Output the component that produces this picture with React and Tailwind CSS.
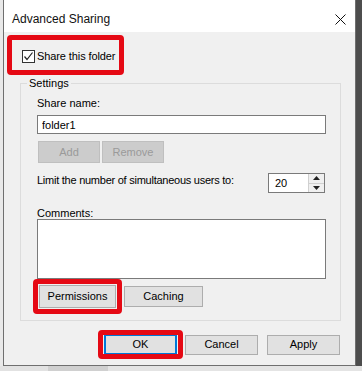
import { useState } from "react";

function Btn({ children, disabled, focused, className = "" }) {
  let tone = "bg-[#e1e1e1] border-[#adadad] text-[#000]";
  if (disabled) tone = "bg-[#cccccc] border-[#bfbfbf] text-[#9a9a9a]";
  if (focused) tone = "bg-[#e1e1e1] border-[#0078d7] text-[#000] border-x-2";
  return (
    <button
      className={`flex items-center justify-center border text-[11px] leading-none ${tone} ${className}`}
    >
      {children}
    </button>
  );
}

function Callout({ children, className = "" }) {
  return <div className={`rounded-[4px] border-[5px] border-[#e50914] ${className}`}>{children}</div>;
}

export default function App() {
  const [shared, setShared] = useState(true);
  const [name, setName] = useState("folder1");
  const [limit, setLimit] = useState(20);
  const [comments, setComments] = useState("");

  return (
    <div
      className="flex h-[371px] w-[362px] flex-col overflow-hidden bg-[#dadada] text-black"
      style={{ fontFamily: '"Liberation Sans", Arial, sans-serif' }}
    >
      <div className="flex h-[366px]">
        <div className="w-[3px] bg-[#e9e9e9]" />

        {/* dialog window */}
        <div className="flex w-[353px] flex-col border-x border-b border-[#6f6f6f] bg-[#f0f0f0]">
          <div className="flex h-[32px] items-start justify-between bg-white pl-[8px] pr-[9px]">
            <span className="mt-[11px] text-[12px] leading-[16px] text-[#111]">Advanced Sharing</span>
            <svg className="mt-[14px]" width="11" height="11" viewBox="0 0 11 11">
              <path d="M0.5 0.5 L10.5 10.5 M10.5 0.5 L0.5 10.5" stroke="#111" strokeWidth="1" />
            </svg>
          </div>

          <Callout className="ml-[3px] mt-[3px] h-[40px] w-[117px] pl-[10px] pt-[10px]">
            <label className="flex items-start gap-[2px] whitespace-nowrap">
              <input
                type="checkbox"
                checked={shared}
                onChange={(e) => setShared(e.target.checked)}
                className="hidden"
              />
              <span className="flex h-[13px] w-[13px] shrink-0 items-center justify-center border border-[#333] bg-white">
                {shared && (
                  <svg width="11" height="11" viewBox="0 0 11 11">
                    <path d="M1.5 5.5 L4 8.5 L9.5 1.5" fill="none" stroke="#222" strokeWidth="1.2" />
                  </svg>
                )}
              </span>
              <span className="text-[11px] leading-[13px] tracking-[-0.1px]">Share this folder</span>
            </label>
          </Callout>

          {/* Settings group */}
          <div className="relative ml-[16px] mt-[8px] w-[321px] border border-[#dcdcdc] pb-[6px] pl-[16px]">
            <span className="absolute -top-[7px] left-[6px] bg-[#f0f0f0] px-[2px] text-[11px] leading-[13px]">
              Settings
            </span>

            <div className="mt-[13px] text-[11px] leading-[13px]">Share name:</div>
            <input
              value={name}
              onChange={(e) => setName(e.target.value)}
              className="mt-[5px] block h-[19px] w-[289px] border border-[#7a7a7a] bg-white pl-[4px] text-[11px] leading-[17px] outline-none"
            />

            <div className="mt-[7px] flex gap-[2px] pl-[1px]">
              <Btn disabled className="h-[22px] w-[62px]">Add</Btn>
              <Btn disabled className="h-[22px] w-[62px]">Remove</Btn>
            </div>

            <div className="mt-[10px] flex w-[288px] items-start justify-between">
              <span className="mt-[1px] text-[11px] leading-[13px] tracking-[-0.25px]">
                Limit the number of simultaneous users to:
              </span>
              <div className="flex h-[20px] w-[57px] border border-[#7a7a7a] bg-white">
                <input
                  value={limit}
                  onChange={(e) => setLimit(e.target.value)}
                  className="w-[39px] pl-[6px] text-[11px] outline-none"
                />
                <div className="flex w-[16px] flex-col border-l border-[#d0d0d0]">
                  <span className="flex flex-1 items-center justify-center border-b border-[#d0d0d0] bg-[#f0f0f0]">
                    <svg width="7" height="4" viewBox="0 0 7 4"><path d="M3.5 0 L7 4 L0 4 Z" fill="#222" /></svg>
                  </span>
                  <span className="flex flex-1 items-center justify-center bg-[#f0f0f0]">
                    <svg width="7" height="4" viewBox="0 0 7 4"><path d="M0 0 L7 0 L3.5 4 Z" fill="#222" /></svg>
                  </span>
                </div>
              </div>
            </div>

            <div className="mt-[14px] text-[11px] leading-[12px]">Comments:</div>
            <textarea
              value={comments}
              onChange={(e) => setComments(e.target.value)}
              className="block h-[60px] w-[289px] resize-none border border-[#7a7a7a] bg-white text-[11px] outline-none"
            />

            <div className="flex items-center">
              <Callout className="-ml-[4px] px-[1px] py-[1px]">
                <Btn className="h-[23px] w-[77px]">Permissions</Btn>
              </Callout>
              <Btn className="ml-[2px] h-[21px] w-[79px]">Caching</Btn>
            </div>
          </div>

          {/* dialog buttons */}
          <div className="mt-[9px] flex items-center pl-[94px]">
            <Callout className="px-[1px]">
              <Btn focused className="h-[19px] w-[73px]">OK</Btn>
            </Callout>
            <Btn className="ml-[2px] h-[20px] w-[73px]">Cancel</Btn>
            <Btn className="ml-[9px] h-[20px] w-[73px]">Apply</Btn>
          </div>
        </div>

        <div className="flex-1 bg-[#4d4d4d]" />
      </div>
      <div className="flex h-[5px]">
        <div className="w-[48px] bg-[#e2e2e2]" />
        <div className="w-[60px] bg-[#d0d0d0]" />
        <div className="flex-1 bg-[#e4e4e4]" />
      </div>
    </div>
  );
}
